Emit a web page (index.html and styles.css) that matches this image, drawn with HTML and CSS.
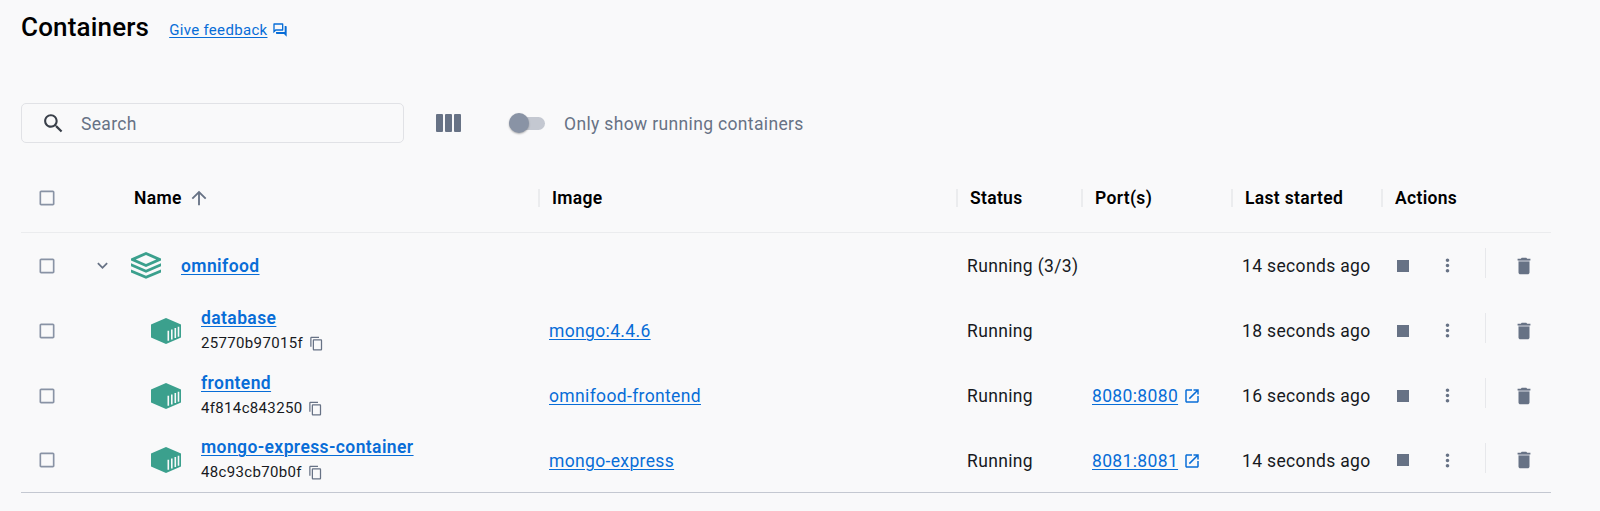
FILE: index.html
```html
<!DOCTYPE html>
<html lang="en">
<head>
<meta charset="utf-8">
<title>Containers</title>
<link rel="stylesheet" href="styles.css">
</head>
<body>
<svg class="sprite" aria-hidden="true">
  <symbol id="box" viewBox="0 0 24 24"><path d="M19 5v14H5V5h14m0-2H5c-1.100 0-2 .9-2 2v14c0 1.100.9 2 2 2h14c1.100 0 2-.9 2-2V5c0-1.100-.9-2-2-2z"/></symbol>
  <symbol id="copy" viewBox="0 0 24 24"><path d="M16 1H4c-1.100 0-2 .9-2 2v14h2V3h12V1zm3 4H8c-1.100 0-2 .9-2 2v14c0 1.100.9 2 2 2h11c1.100 0 2-.9 2-2V7c0-1.100-.9-2-2-2zm0 16H8V7h11v14z"/></symbol>
  <symbol id="open" viewBox="0 0 24 24"><path d="M19 19H5V5h7V3H5c-1.110 0-2 .9-2 2v14c0 1.100.89 2 2 2h14c1.100 0 2-.9 2-2v-7h-2v7zM14 3v2h3.590l-9.830 9.830 1.410 1.410L19 6.410V10h2V3h-7z"/></symbol>
  <symbol id="dots" viewBox="0 0 24 24"><path d="M12 8c1.100 0 2-.9 2-2s-.9-2-2-2-2 .9-2 2 .9 2 2 2zm0 2c-1.100 0-2 .9-2 2s.9 2 2 2 2-.9 2-2-.9-2-2-2zm0 6c-1.100 0-2 .9-2 2s.9 2 2 2 2-.9 2-2-.9-2-2-2z"/></symbol>
  <symbol id="trash" viewBox="0 0 24 24"><path d="M6 19c0 1.100.9 2 2 2h8c1.100 0 2-.9 2-2V7H6v12zM19 4h-3.500l-1-1h-5l-1 1H5v2h14V4z"/><path d="M6 6h12v1H6z" opacity=".5"/></symbol>
  <symbol id="cube" viewBox="0 0 30 26"><path d="M15 0 30 6.500v13L15 26 0 19.500v-13z"/><path class="slats" d="M17.300 12.800v10M20.800 11.500v10M24.300 10v10M27.500 8.800v10"/></symbol>
</svg>

<header class="page-head">
  <h1 class="title">Containers</h1>
  <a class="feedback" href="#">Give feedback</a>
  <svg class="feedback-icon" viewBox="0 0 24 24"><path d="M15 4v7H5.170L4 12.170V4h11m1-2H3c-.55 0-1 .45-1 1v14l4-4h10c.55 0 1-.45 1-1V3c0-.55-.45-1-1-1zm5 4h-2v9H6v2c0 .55.45 1 1 1h11l4 4V7c0-.55-.45-1-1-1z"/></svg>
</header>

<div class="toolbar">
  <div class="search">
    <svg class="search-icon" viewBox="0 0 24 24"><path d="M15.500 14h-.79l-.28-.27C15.410 12.590 16 11.110 16 9.500 16 5.910 13.090 3 9.500 3S3 5.910 3 9.500 5.910 16 9.500 16c1.610 0 3.090-.59 4.230-1.570l.27.28v.79l5 4.990L20.490 19l-4.990-5zm-6 0C7.010 14 5 11.990 5 9.500S7.010 5 9.500 5 14 7.010 14 9.500 11.990 14 9.500 14z"/></svg>
    <span class="placeholder">Search</span>
  </div>
  <svg class="columns-icon" viewBox="0 0 25 18"><rect width="7" height="18" rx="1"/><rect x="9" width="7" height="18" rx="1"/><rect x="18" width="7" height="18" rx="1"/></svg>
  <div class="switch"><i class="knob"></i></div>
  <span class="switch-label">Only show running containers</span>
</div>

<main class="table">
  <div class="row head">
    <div class="check"><svg><use href="#box"/></svg></div>
    <div class="th name-th"><span>Name</span><svg class="sort" viewBox="0 0 24 24"><path d="M4 12l1.410 1.410L11 7.830V20h2V7.830l5.580 5.590L20 12l-8-8-8 8z"/></svg></div>
    <div class="th"><span>Image</span></div>
    <div class="th"><span>Status</span></div>
    <div class="th"><span>Port(s)</span></div>
    <div class="th"><span>Last started</span></div>
    <div class="th"><span>Actions</span></div>
  </div>

  <div class="row">
    <div class="check"><svg><use href="#box"/></svg></div>
    <div class="name group">
      <svg class="chevron" viewBox="0 0 24 24"><path d="M7.410 8.590 12 13.170l4.590-4.580L18 10l-6 6-6-6 1.410-1.410z"/></svg>
      <svg class="stack" viewBox="0 0 30 27"><path d="M15 0 30 6.400v2.200L15 15 0 8.600V6.400zM15 3.100 4.800 7.500 15 11.900l10.200-4.400zM0 11.300l15 6.400 15-6.400v3L15 20.700 0 14.300zM0 17.400l15 6.400 15-6.400v3L15 26.800 0 20.400z" fill-rule="evenodd"/></svg>
      <a class="link strong" href="#">omnifood</a>
    </div>
    <div class="td"></div>
    <div class="td">Running (3/3)</div>
    <div class="td"></div>
    <div class="td">14 seconds ago</div>
    <div class="actions"><i class="stop"></i><svg class="dots"><use href="#dots"/></svg><i class="rule"></i><svg class="trash"><use href="#trash"/></svg></div>
  </div>

  <div class="row">
    <div class="check"><svg><use href="#box"/></svg></div>
    <div class="name child">
      <svg class="cube"><use href="#cube"/></svg>
      <div class="ident"><a class="link strong" href="#">database</a><div class="hash">25770b97015f<svg><use href="#copy"/></svg></div></div>
    </div>
    <div class="td"><a class="link" href="#">mongo:4.4.6</a></div>
    <div class="td">Running</div>
    <div class="td"></div>
    <div class="td">18 seconds ago</div>
    <div class="actions"><i class="stop"></i><svg class="dots"><use href="#dots"/></svg><i class="rule"></i><svg class="trash"><use href="#trash"/></svg></div>
  </div>

  <div class="row">
    <div class="check"><svg><use href="#box"/></svg></div>
    <div class="name child">
      <svg class="cube"><use href="#cube"/></svg>
      <div class="ident"><a class="link strong" href="#">frontend</a><div class="hash">4f814c843250<svg><use href="#copy"/></svg></div></div>
    </div>
    <div class="td"><a class="link" href="#">omnifood-frontend</a></div>
    <div class="td">Running</div>
    <div class="td"><a class="link" href="#">8080:8080</a><svg class="open"><use href="#open"/></svg></div>
    <div class="td">16 seconds ago</div>
    <div class="actions"><i class="stop"></i><svg class="dots"><use href="#dots"/></svg><i class="rule"></i><svg class="trash"><use href="#trash"/></svg></div>
  </div>

  <div class="row last">
    <div class="check"><svg><use href="#box"/></svg></div>
    <div class="name child">
      <svg class="cube"><use href="#cube"/></svg>
      <div class="ident"><a class="link strong" href="#">mongo-express-container</a><div class="hash">48c93cb70b0f<svg><use href="#copy"/></svg></div></div>
    </div>
    <div class="td"><a class="link" href="#">mongo-express</a></div>
    <div class="td">Running</div>
    <div class="td"><a class="link" href="#">8081:8081</a><svg class="open"><use href="#open"/></svg></div>
    <div class="td">14 seconds ago</div>
    <div class="actions"><i class="stop"></i><svg class="dots"><use href="#dots"/></svg><i class="rule"></i><svg class="trash"><use href="#trash"/></svg></div>
  </div>
</main>
</body>
</html>
```
FILE: styles.css
```css
* { box-sizing: border-box; }
body {
  margin: 0;
  padding: 0 49px 0 21px;
  height: 511px;
  overflow: hidden;
  background: #f9f9fa;
  color: #17191e;
  font: 400 17.5px/25px Roboto, sans-serif;
  letter-spacing: 0.35px;
}
svg { display: block; flex: none; fill: #677285; }
.sprite { position: absolute; width: 0; height: 0; }
.slats { stroke: #f9f9fa; stroke-width: 1.6; }

.page-head { display: flex; align-items: center; height: 60px; padding-bottom: 8px; }
.title { margin: 2px 0 0; font-size: 26px; font-weight: 500; line-height: 30px; color: #000; letter-spacing: 0.17px; }
.feedback { margin: 8px 0 0 20px; font-size: 15px; line-height: 20px; letter-spacing: 0.32px; color: #086dd7; text-underline-offset: 2px; text-decoration-thickness: 1px; }
.feedback-icon { width: 16px; height: 16px; margin: 8px 0 0 4px; fill: #086dd7; }

.toolbar { display: flex; align-items: center; height: 40px; margin-top: 43px; color: #677285; }
.search { display: flex; align-items: center; width: 383px; height: 40px; border: 1px solid #e1e2e6; border-radius: 5px; padding-left: 19px; color: #677285; }
.search-icon { width: 25px; height: 25px; margin-right: 15px; fill: #393f49; }
.placeholder { padding-top: 2px; }
.columns-icon { width: 25px; height: 18px; margin-left: 32px; }
.switch { width: 36px; height: 13px; margin-left: 48px; border-radius: 7px; background: #c4c8d1; display: flex; align-items: center; }
.knob { width: 20px; height: 20px; border-radius: 50%; background: #8993a5; box-shadow: 0 1px 2px rgba(0,0,0,.3); }
.switch-label { margin-left: 19px; padding-top: 2px; }

.table { margin-top: 20px; border-bottom: 1px solid #c4c8d1; }
.row { display: grid; grid-template-columns: 51px 467px 418px 125px 150px 150px 1fr; height: 65px; align-items: center; }
.head { height: 70px; border-bottom: 1px solid #ebecee; }
.last { height: 64px; }
.check { padding-left: 16px; }
.check svg { width: 20px; height: 20px; fill: #8993a5; }
.th { height: 18px; display: flex; align-items: center; margin-left: -1px; padding-left: 12px; border-left: 2px solid #ebecee; color: #000; font-weight: 600; letter-spacing: 0.32px; }
.th span { padding-top: 2px; }
.name-th { border: 0; padding-left: 63px; }
.sort { width: 22px; height: 22px; margin-left: 6px; }
.td { display: flex; align-items: center; padding: 2px 0 0 10px; white-space: nowrap; }
.link { color: #086dd7; text-decoration-thickness: 1px; text-underline-offset: 2px; }
.strong { font-weight: 600; letter-spacing: 0.4px; }
.open { width: 18px; height: 18px; margin: -1px 0 0 5px; fill: #086dd7; }

.name { display: flex; align-items: center; }
.group { padding-left: 20px; }
.group .strong { padding-top: 1px; }
.chevron { width: 21px; height: 21px; }
.stack { width: 30px; height: 27px; margin: 0 20px 0 18px; fill: #3ba08d; }
.child { padding-left: 79px; }
.cube { width: 30px; height: 26px; margin-right: 20px; fill: #3ba08d; }
.ident { line-height: 25px; }
.hash { display: flex; align-items: center; font-size: 15px; line-height: 25px; letter-spacing: 0.34px; }
.hash svg { width: 15px; height: 15px; margin-left: 6px; }

.actions { display: flex; align-items: center; padding-left: 14.500px; }
.stop { width: 12px; height: 12px; background: #677285; }
.dots { width: 21px; height: 21px; margin-left: 28.500px; }
.rule { width: 1px; height: 30px; margin: -5px 0 0 27px; background: #e7e8eb; }
.trash { width: 22px; height: 22px; margin-left: 26.500px; }
```
